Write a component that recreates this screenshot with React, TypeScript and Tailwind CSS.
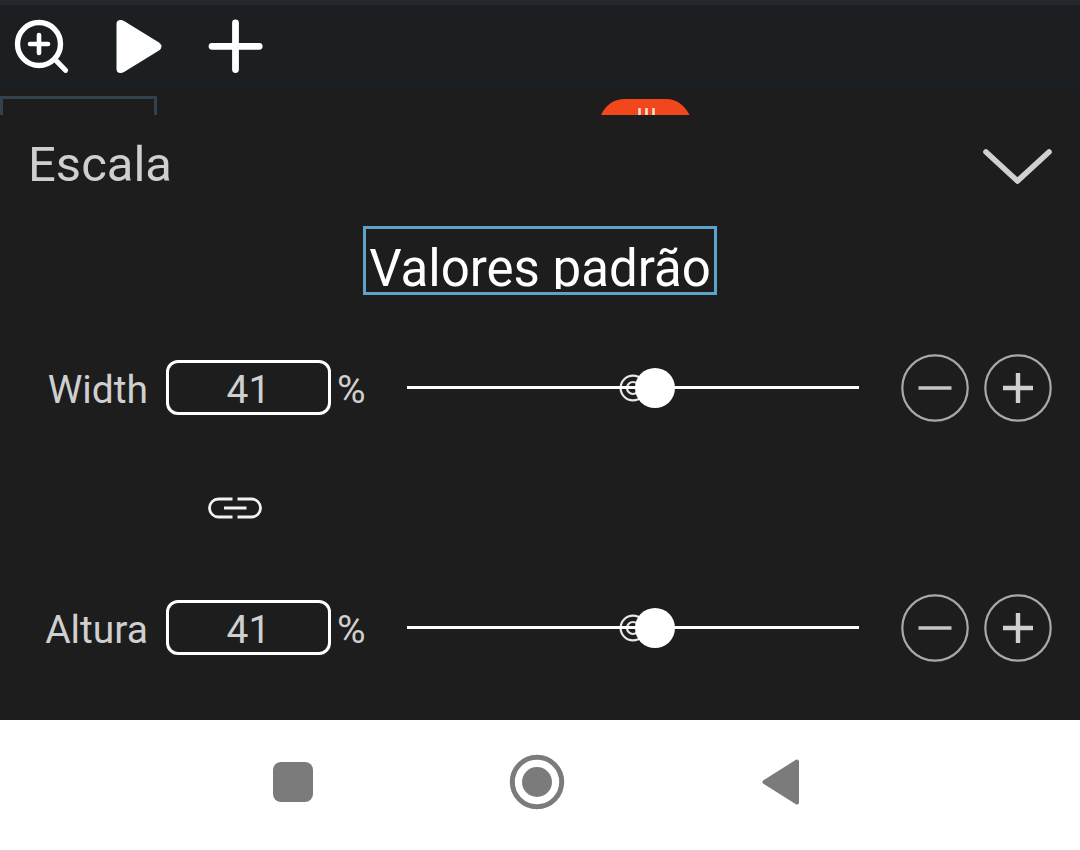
import { useState } from "react";

const MAX_SCALE = 74;

function clamp(value: number) {
  return Math.min(MAX_SCALE, Math.max(0, value));
}

function Toolbar() {
  return (
    <header className="flex h-[88px] items-start gap-11 border-t-[5px] border-[#24282c] bg-[#1b1f21] px-3 pt-3 text-white">
      <button type="button" aria-label="Zoom" className="size-[60px]">
        <svg viewBox="0 0 60 60" className="size-full" fill="none" stroke="currentColor" strokeLinecap="round">
          <circle cx="27" cy="27" r="21.5" strokeWidth="5.4" />
          <path d="M27 18v18M18 27h18" strokeWidth="4.6" />
          <path d="M44 43.5l9.5 9.8" strokeWidth="5.2" />
        </svg>
      </button>
      <button type="button" aria-label="Play" className="h-[60px] w-[46px]">
        <svg viewBox="0 0 46 60" className="size-full" fill="currentColor">
          <path d="M0.5 7Q0.5 3 4.5 3Q6.5 3 8 4L43 25.5Q45.5 27.5 45.5 29.5Q45.5 31.5 43 33.5L8 55Q6.5 56 4.5 56Q0.5 56 0.5 52Z" />
        </svg>
      </button>
      <button type="button" aria-label="Add" className="size-[60px]">
        <svg viewBox="0 0 60 60" className="size-full" fill="none" stroke="currentColor" strokeWidth="6.8" strokeLinecap="round">
          <path d="M29.5 6v46.6M6 29.3h47.2" />
        </svg>
      </button>
    </header>
  );
}

function TimelineStrip() {
  return (
    <div className="flex h-[27px] items-start overflow-hidden pt-2">
      <div className="h-10 w-[157px] shrink-0 border-[3px] border-[#2f424d]" />
      <svg viewBox="0 0 96 24" className="ml-[440px] mt-[3px] h-6 w-24 shrink-0">
        <path d="M1 24C5 10 13 0 28 0H69C83 0 91 10 96 24Z" fill="#f0471d" />
        <path d="M42.500 9v15M49.500 9v15M56.500 9v15" stroke="#fbdccf" strokeWidth="2.6" />
      </svg>
    </div>
  );
}

type StepButtonProps = { label: string; plus?: boolean; onClick: () => void };

function StepButton({ label, plus, onClick }: StepButtonProps) {
  return (
    <button type="button" aria-label={label} onClick={onClick} className="size-[68px] shrink-0">
      <svg viewBox="0 0 68 68" className="size-full" fill="none">
        <circle cx="34" cy="34" r="32.7" stroke="#a9a9a9" strokeWidth="2.2" />
        {plus ? (
          <path d="M34 19v30M19 34h30" stroke="#d0d0d0" strokeWidth="4.4" />
        ) : (
          <path d="M17.5 34h33" stroke="#c4c4c4" strokeWidth="3.6" />
        )}
      </svg>
    </button>
  );
}

type ScaleRowProps = { id: string; label: string; value: number; onChange: (value: number) => void };

function ScaleRow({ id, label, value, onChange }: ScaleRowProps) {
  return (
    <div className="flex h-[69px] items-center px-7">
      <label htmlFor={id} className="w-[120px] shrink-0 pt-[5px] text-right text-[39px] leading-[48px]">
        {label}
      </label>
      <input
        id={id}
        type="text"
        inputMode="numeric"
        value={value}
        onChange={(e) => onChange(Number(e.target.value) || 0)}
        className="ml-[18px] h-[55px] w-[165px] shrink-0 rounded-[12px] border-[3px] border-white bg-transparent pt-[5px] text-center text-[39px] leading-[48px] outline-none"
      />
      <span className="ml-[6px] w-[70px] shrink-0 pt-[5px] text-[39px] leading-[48px]">%</span>
      <div className="relative flex h-10 min-w-0 flex-1 items-center">
        <svg viewBox="0 0 28 28" className="absolute inset-0 m-auto size-7" fill="none" stroke="#e6e6e6" strokeWidth="2.2">
          <circle cx="14" cy="14" r="12.4" />
          <circle cx="14" cy="14" r="6" />
        </svg>
        <input
          type="range"
          aria-label={label}
          min={0}
          max={MAX_SCALE}
          value={value}
          onChange={(e) => onChange(Number(e.target.value))}
          className="relative h-10 w-full appearance-none bg-transparent outline-none [&::-moz-range-thumb]:size-10 [&::-moz-range-thumb]:rounded-full [&::-moz-range-thumb]:border-0 [&::-moz-range-thumb]:bg-white [&::-moz-range-track]:h-[3px] [&::-moz-range-track]:bg-white [&::-webkit-slider-runnable-track]:h-10 [&::-webkit-slider-runnable-track]:bg-[linear-gradient(white,white)] [&::-webkit-slider-runnable-track]:bg-[length:100%_3px] [&::-webkit-slider-runnable-track]:bg-center [&::-webkit-slider-runnable-track]:bg-no-repeat [&::-webkit-slider-thumb]:size-10 [&::-webkit-slider-thumb]:appearance-none [&::-webkit-slider-thumb]:rounded-full [&::-webkit-slider-thumb]:bg-white"
        />
      </div>
      <div className="ml-[42px] flex shrink-0 gap-[15px]">
        <StepButton label={`${label} -`} onClick={() => onChange(value - 1)} />
        <StepButton label={`${label} +`} plus onClick={() => onChange(value + 1)} />
      </div>
    </div>
  );
}

function ScalePanel() {
  const [width, setWidth] = useState(41);
  const [height, setHeight] = useState(41);
  const [linked, setLinked] = useState(true);

  const changeWidth = (value: number) => {
    setWidth(clamp(value));
    if (linked) setHeight(clamp(value));
  };
  const changeHeight = (value: number) => {
    setHeight(clamp(value));
    if (linked) setWidth(clamp(value));
  };
  const reset = () => {
    setWidth(MAX_SCALE / 2);
    setHeight(MAX_SCALE / 2);
  };

  return (
    <section className="flex flex-col pb-[58px] text-[#cfcfcf]">
      <div className="flex h-[111px] items-start justify-between px-7 pt-5">
        <h1 className="text-[49px] leading-[60px]">Escala</h1>
        <button type="button" aria-label="Close" className="mt-3 h-11 w-[70px]">
          <svg viewBox="0 0 70 44" className="size-full" fill="none" stroke="#d0d0d0" strokeWidth="5.6" strokeLinecap="round" strokeLinejoin="round">
            <path d="M4 5L35.500 34L67 5" />
          </svg>
        </button>
      </div>
      <button
        type="button"
        onClick={reset}
        className="flex h-[69px] w-[354px] items-start justify-center self-center border-[3px] border-[#5ba3cb] text-white"
      >
        <span className="h-[60px] overflow-hidden whitespace-nowrap pt-[10px] text-[51px] leading-[60px]">Valores padrão</span>
      </button>
      <div className="mt-[58px]">
        <ScaleRow id="scale-width" label="Width" value={width} onChange={changeWidth} />
      </div>
      <div className="flex h-[171px] items-center pl-[208px]">
        <button type="button" aria-label="Link" aria-pressed={linked} onClick={() => setLinked(!linked)} className="h-6 w-[54px]">
          <svg viewBox="0 0 54 24" className="size-full" fill="none" stroke="#f2f2f2" strokeWidth="2.8">
            <path d="M24.5 3H10.5C5.5 3 1.5 7 1.5 12S5.5 21 10.5 21H24.5M29.5 3H43.5C48.5 3 52.5 7 52.5 12S48.5 21 43.5 21H29.5M16 12H38.5" />
          </svg>
        </button>
      </div>
      <ScaleRow id="scale-height" label="Altura" value={height} onChange={changeHeight} />
    </section>
  );
}

function SystemNav() {
  return (
    <nav className="flex h-[130px] items-center justify-center bg-white pb-[6px] pr-[7px] text-[#7b7b7b]">
      <button type="button" aria-label="Recents" className="flex w-[244px] justify-center">
        <span className="size-10 rounded-[8px] bg-current" />
      </button>
      <button type="button" aria-label="Home" className="flex w-[244px] justify-center">
        <svg viewBox="0 0 56 56" className="size-14">
          <circle cx="28" cy="28" r="24.7" fill="none" stroke="currentColor" strokeWidth="5" />
          <circle cx="28" cy="28" r="15" fill="currentColor" />
        </svg>
      </button>
      <button type="button" aria-label="Back" className="flex w-[244px] justify-center">
        <svg viewBox="0 0 38 48" className="h-12 w-[38px]" fill="currentColor" stroke="currentColor" strokeWidth="4" strokeLinejoin="round">
          <path d="M2.500 24L35 3.500V44.500Z" />
        </svg>
      </button>
    </nav>
  );
}

export default function App() {
  return (
    <div className="min-h-screen bg-white font-['Roboto',sans-serif]">
      <main className="bg-[#1d1d1d]">
        <Toolbar />
        <TimelineStrip />
        <ScalePanel />
      </main>
      <SystemNav />
    </div>
  );
}
